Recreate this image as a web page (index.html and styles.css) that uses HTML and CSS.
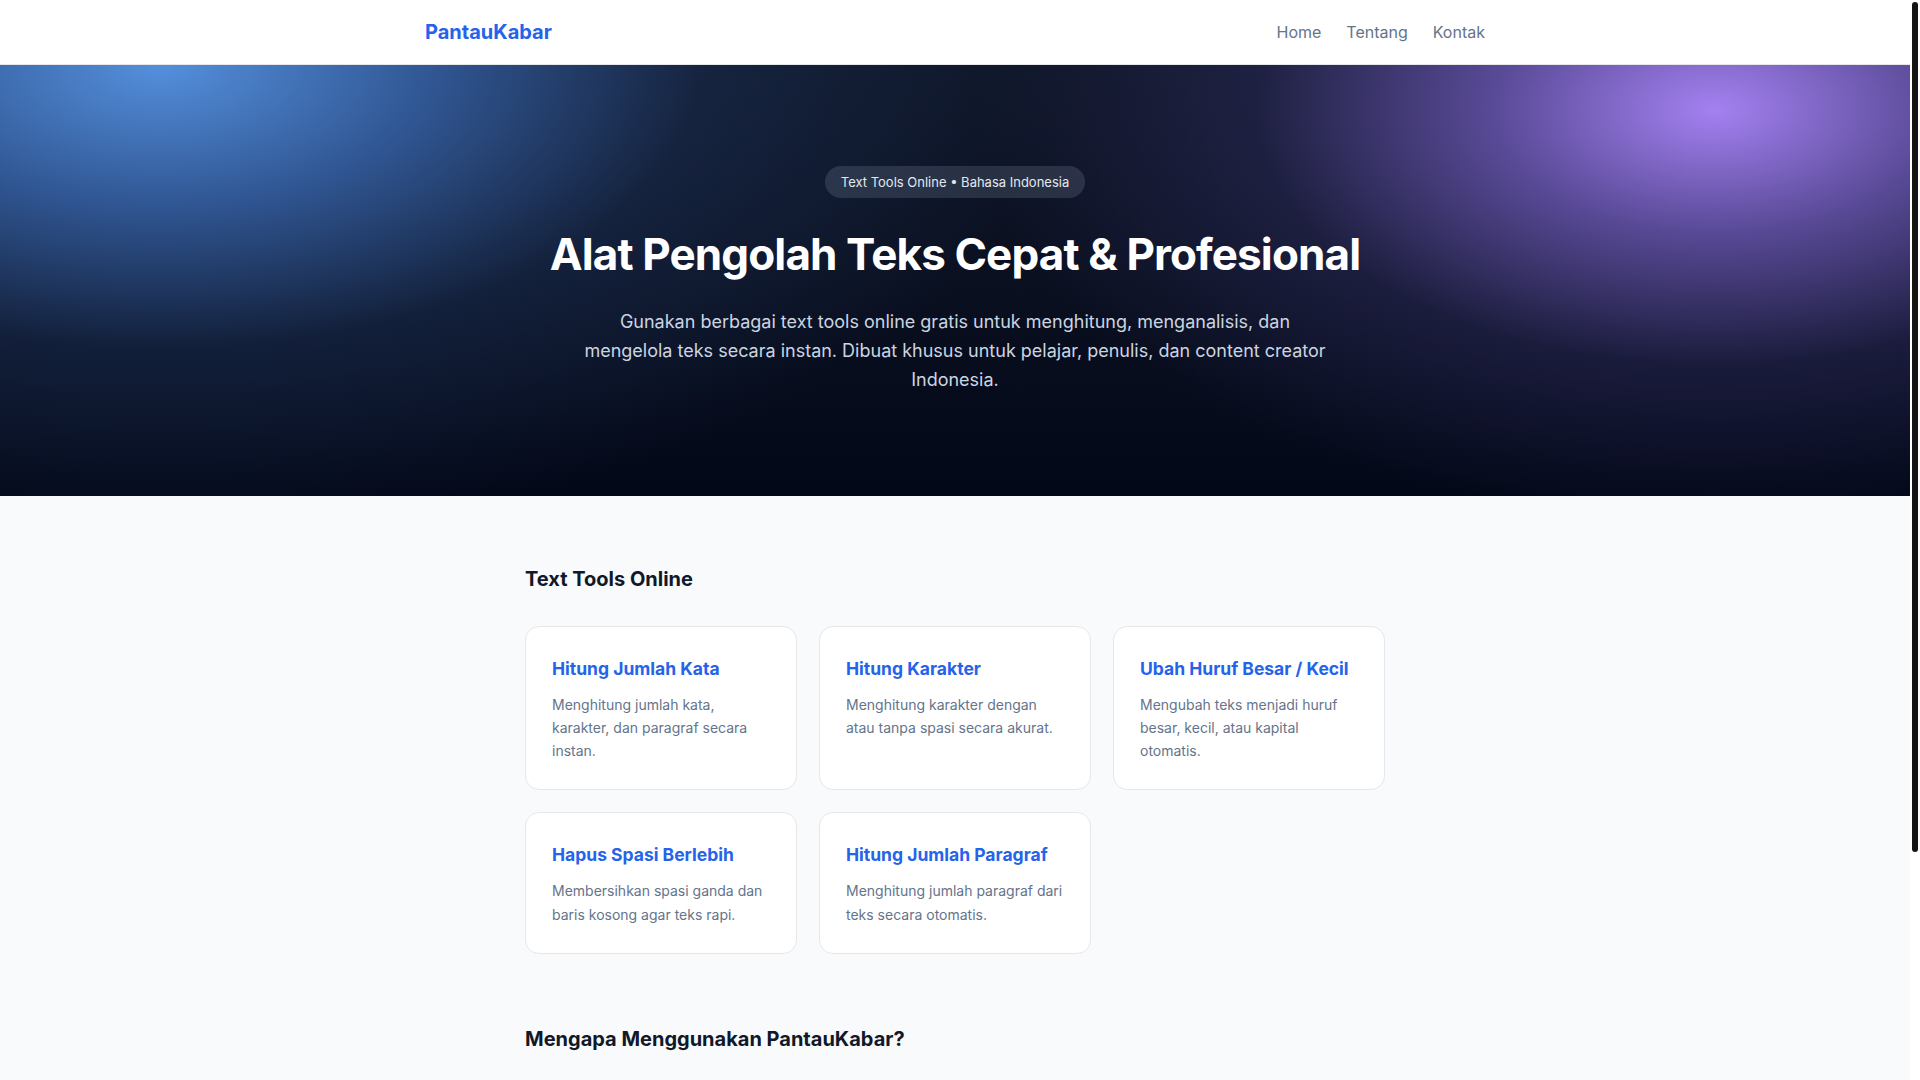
FILE: index.html
```html
<!DOCTYPE html>
<html lang="id">
<head>
<meta charset="utf-8">
<title>PantauKabar - Text Tools Online</title>
<link rel="stylesheet" href="styles.css">
</head>
<body>
<div class="scroll-thumb" aria-hidden="true"></div>
<header class="site-header">
  <div class="container header-inner">
    <a class="logo" href="#">PantauKabar</a>
    <nav class="nav">
      <a href="#">Home</a>
      <a href="#">Tentang</a>
      <a href="#">Kontak</a>
    </nav>
  </div>
</header>

<section class="hero">
  <div class="hero-inner">
    <span class="badge">Text Tools Online • Bahasa Indonesia</span>
    <h1 class="hero-title">Alat Pengolah Teks Cepat &amp; Profesional</h1>
    <p class="hero-sub">Gunakan berbagai text tools online gratis untuk menghitung, menganalisis, dan mengelola teks secara instan. Dibuat khusus untuk pelajar, penulis, dan content creator Indonesia.</p>
  </div>
</section>

<main class="main">
  <section class="section tools">
    <h2 class="section-title">Text Tools Online</h2>
    <div class="card-grid">
      <a class="card" href="#">
        <h3 class="card-title">Hitung Jumlah Kata</h3>
        <p class="card-desc">Menghitung jumlah kata, karakter, dan paragraf secara instan.</p>
      </a>
      <a class="card" href="#">
        <h3 class="card-title">Hitung Karakter</h3>
        <p class="card-desc">Menghitung karakter dengan atau tanpa spasi secara akurat.</p>
      </a>
      <a class="card" href="#">
        <h3 class="card-title">Ubah Huruf Besar / Kecil</h3>
        <p class="card-desc">Mengubah teks menjadi huruf besar, kecil, atau kapital otomatis.</p>
      </a>
      <a class="card" href="#">
        <h3 class="card-title">Hapus Spasi Berlebih</h3>
        <p class="card-desc">Membersihkan spasi ganda dan baris kosong agar teks rapi.</p>
      </a>
      <a class="card" href="#">
        <h3 class="card-title">Hitung Jumlah Paragraf</h3>
        <p class="card-desc">Menghitung jumlah paragraf dari teks secara otomatis.</p>
      </a>
    </div>
  </section>

  <section class="section why">
    <h2 class="section-title">Mengapa Menggunakan PantauKabar?</h2>
    <ul class="why-list">
      <li>Gratis dan tanpa perlu mendaftar akun.</li>
      <li>Cepat, ringan, dan bisa digunakan di perangkat apa pun.</li>
      <li>Teks Anda diproses langsung di browser dan tidak disimpan.</li>
      <li>Antarmuka sederhana dalam Bahasa Indonesia.</li>
    </ul>
  </section>
</main>

<footer class="site-footer">
  <div class="container">© 2024 PantauKabar. Semua hak dilindungi.</div>
</footer>
</body>
</html>
```

FILE: styles.css
```css
* {
  box-sizing: border-box;
}

html, body {
  margin: 0;
  padding: 0;
}

html {
  background: #ffffff;
}

body {
  font-family: Inter, "Noto Sans", "Liberation Sans", sans-serif;
  background: #f8fafc;
  color: #0f172a;
  margin-right: 10px;
}

/* imitation of the page scrollbar shown in the screenshot */
.scroll-thumb {
  position: fixed;
  top: 2px;
  right: 2px;
  width: 6px;
  height: 850px;
  border-radius: 3px;
  background: #141414;
  z-index: 10;
}

a {
  text-decoration: none;
  color: inherit;
}

.container {
  max-width: 1060px;
  margin: 0 auto;
}

/* Header */
.site-header {
  background: #ffffff;
  border-bottom: 1px solid #e5e7eb;
}

.header-inner {
  height: 64px;
  display: flex;
  align-items: center;
  justify-content: space-between;
}

.logo {
  font-size: 20px;
  font-weight: 700;
  color: #2563eb;
}

.nav {
  display: flex;
  gap: 25px;
}

.nav a {
  font-size: 16px;
  color: #64748b;
}

/* Hero */
.hero {
  background:
    radial-gradient(ellipse 900px 470px at 160px 0px, rgba(88, 150, 230, 0.95) 0%, rgba(62, 112, 190, 0.72) 30%, rgba(35, 60, 105, 0.38) 60%, rgba(15, 23, 42, 0) 100%),
    radial-gradient(ellipse 740px 410px at 1715px 45px, rgba(172, 135, 252, 0.95) 0%, rgba(125, 100, 205, 0.68) 30%, rgba(65, 58, 125, 0.32) 62%, rgba(15, 23, 42, 0) 100%),
    linear-gradient(180deg, #0e1526 0%, #0a1020 50%, #030818 100%);
  padding: 101px 24px 101px;
}

.hero-inner {
  max-width: 960px;
  margin: 0 auto;
  display: flex;
  flex-direction: column;
  align-items: center;
  text-align: center;
}

.badge {
  display: inline-block;
  height: 32px;
  line-height: 32px;
  padding: 0 16px;
  border-radius: 16px;
  background: rgba(148, 163, 184, 0.2);
  color: #e2e8f0;
  font-size: 13px;
}

.hero-title {
  margin: 30px 0 0;
  font-size: 44px;
  line-height: 1.2;
  font-weight: 700;
  letter-spacing: -0.02em;
  color: #ffffff;
}

.hero-sub {
  margin: 26px 0 0;
  max-width: 760px;
  font-size: 18px;
  line-height: 1.63;
  color: #cbd5e1;
}

/* Main */
.main {
  max-width: 860px;
  margin: 0 auto;
}

.section {
  padding-top: 70px;
}

.section-title {
  margin: 0 0 34px;
  font-size: 20px;
  line-height: 1.3;
  font-weight: 700;
  color: #111827;
}

.card-grid {
  display: grid;
  grid-template-columns: repeat(3, 1fr);
  gap: 22px;
}

.card {
  display: block;
  background: #ffffff;
  border: 1px solid #e5e7eb;
  border-radius: 14px;
  padding: 29px 26px 27px;
}

.card-title {
  margin: 0 0 12px;
  font-size: 17.5px;
  line-height: 1.44;
  font-weight: 700;
  color: #2563eb;
}

.card-desc {
  margin: 0;
  font-size: 14px;
  line-height: 1.65;
  color: #64748b;
}

.why {
  padding-top: 72px;
}

.why-list {
  margin: 0;
  padding-left: 20px;
  font-size: 16px;
  line-height: 1.8;
  color: #475569;
}

.site-footer {
  margin-top: 80px;
  padding: 36px 0;
  border-top: 1px solid #e5e7eb;
  background: #ffffff;
  text-align: center;
  font-size: 14px;
  color: #64748b;
}
```
